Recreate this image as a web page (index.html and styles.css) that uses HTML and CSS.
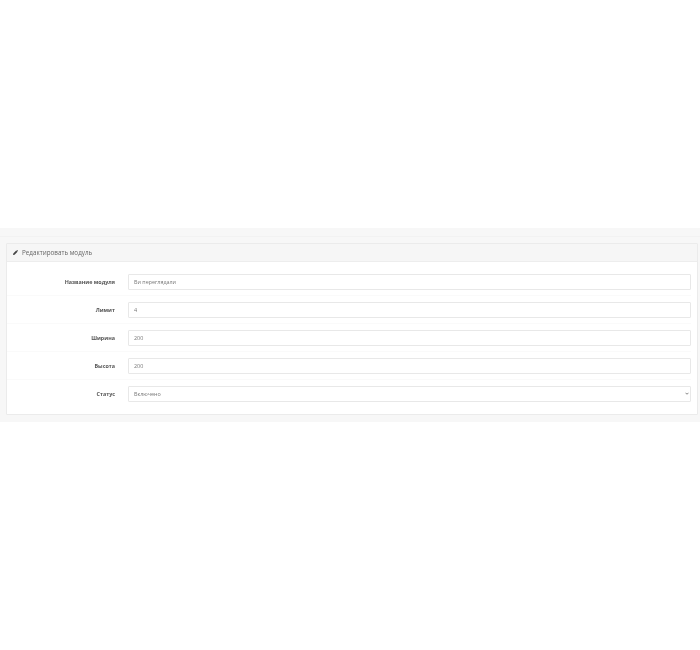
FILE: index.html
```html
<!DOCTYPE html>
<html lang="ru">
<head>
  <meta charset="UTF-8">
  <title>Редактировать модуль</title>
  <link rel="stylesheet" href="styles.css">
</head>
<body>
  <div class="content">
    <div class="page-header"></div>
    <div class="container">
      <div class="panel">
        <div class="panel-heading">
          <svg class="icon" viewBox="0 0 10 10"><path d="M0 10 L0.6 6.8 L6.4 1 L9 3.6 L3.2 9.4 Z M7.2 0.4 L7.8 0 Q8.2 -0.2 8.6 0.2 L9.8 1.4 Q10.2 1.8 9.9 2.2 L9.6 2.8 Z"/></svg>
          <h3>Редактировать модуль</h3>
        </div>
        <form class="panel-body">
          <div class="form-group">
            <label for="name">Название модуля</label>
            <input type="text" id="name" value="Ви переглядали">
          </div>
          <div class="form-group">
            <label for="limit">Лимит</label>
            <input type="text" id="limit" value="4">
          </div>
          <div class="form-group">
            <label for="width">Ширина</label>
            <input type="text" id="width" value="200">
          </div>
          <div class="form-group">
            <label for="height">Высота</label>
            <input type="text" id="height" value="200">
          </div>
          <div class="form-group">
            <label for="status">Статус</label>
            <div class="select-wrap">
              <select id="status">
                <option>Включено</option>
                <option>Отключено</option>
              </select>
              <svg class="select-arrow" viewBox="0 0 8 6"><path d="M1 1.5 L4 4.5 L7 1.5" fill="none" stroke="#777" stroke-width="1.8"/></svg>
            </div>
          </div>
        </form>
      </div>
    </div>
  </div>
</body>
</html>
```

FILE: styles.css
```css
body {
  margin: 0;
  padding-top: 228px;
  background-color: #fff;
  font-family: "Open Sans", sans-serif;
  font-size: 5.4px;
  color: #666;
}

/* the blur also takes the colour fringes off the small text */
.content {
  background-color: #f7f7f7;
  filter: blur(0.3px);
}

.page-header {
  height: 8px;
  border-bottom: 1px solid #f2f2f2;
}

.container {
  padding: 6px 2px 7px 6px;
}

.panel {
  background-color: #fff;
  border: 1px solid #ebebeb;
  border-radius: 1px;
}

.panel-heading {
  display: flex;
  align-items: center;
  gap: 4px;
  height: 17px;
  padding-left: 6px;
  background-color: #f6f6f6;
  border-bottom: 1px solid #ededed;
}

.icon {
  width: 5px;
  height: 5px;
  fill: #444;
}

.panel-heading h3 {
  margin: 0;
  font-size: 6.3px;
  font-weight: 400;
  color: #666;
}

.panel-body {
  padding: 6px 6px 7px 0;
}

.form-group {
  display: flex;
  align-items: center;
  gap: 13px;
  height: 27px;
  border-top: 1px solid #fafafa;
}

.form-group:first-child {
  border-top: none;
}

.form-group label {
  width: 108px;
  flex-shrink: 0;
  text-align: right;
  font-weight: 700;
  color: #555;
}

.form-group input,
.form-group select {
  flex: 1;
  width: 100%;
  min-width: 0;
  box-sizing: border-box;
  height: 16px;
  padding: 0 5px;
  background-color: #fff;
  border: 1px solid #e8e8e8;
  border-radius: 1px;
  font-family: inherit;
  font-size: 5.4px;
  color: #777;
}

.select-wrap {
  position: relative;
  display: flex;
  flex: 1;
  min-width: 0;
}

.form-group select {
  appearance: none;
}

.select-arrow {
  position: absolute;
  top: 6px;
  right: 2px;
  width: 4px;
  height: 3px;
}
```
